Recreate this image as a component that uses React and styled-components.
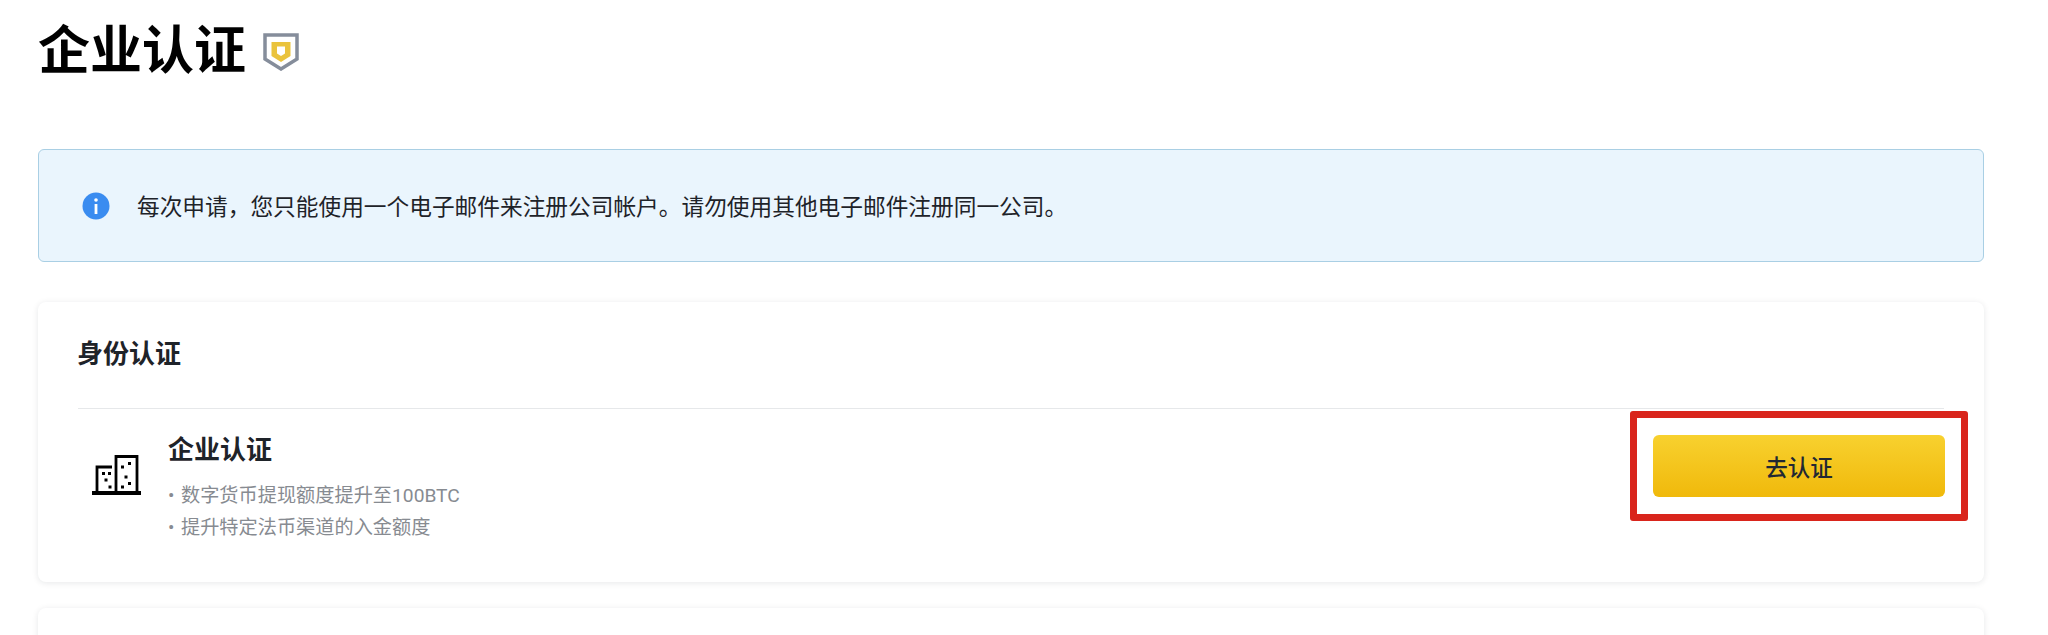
import styled, { createGlobalStyle } from "styled-components";

const GlobalStyle = createGlobalStyle`
  html, body {
    margin: 0;
    padding: 0;
    background: #fff;
    overflow: hidden;
    font-family: Roboto, "Noto Sans CJK SC", sans-serif;
  }
`;

const Page = styled.div`
  height: 635px;
  overflow: hidden;
  padding: 0 64px 0 38px;
`;

const TitleRow = styled.div`
  display: flex;
  align-items: center;
  gap: 17px;
  height: 104px;
  margin-bottom: 45px;
`;

const Title = styled.h1`
  margin: 0;
  font-size: 52px;
  line-height: 104px;
  font-weight: 700;
  color: #000;
`;

const Alert = styled.div`
  display: flex;
  align-items: center;
  gap: 27px;
  height: 113px;
  box-sizing: border-box;
  padding-left: 43px;
  background: #eaf5fd;
  border: 1px solid #a9cfe4;
  border-radius: 6px;
  font-size: 22.7px;
  color: #1e2329;
  margin-bottom: 40px;
`;

const Card = styled.section`
  background: #fff;
  border-radius: 8px;
  box-shadow: 0 1px 6px rgba(20, 30, 40, 0.1);
  margin-bottom: 26px;
  padding: 0 16px 0 40px;
  height: 280px;
  box-sizing: border-box;
`;

const CardTitle = styled.h2`
  margin: 0 24px 0 0;
  height: 107px;
  line-height: 104px;
  font-size: 26px;
  font-weight: 600;
  text-indent: -1px;
  color: #1e2329;
  border-bottom: 1px solid #e6e8ea;
  box-sizing: border-box;
`;

const Row = styled.div`
  display: flex;
  align-items: flex-start;
  justify-content: space-between;
  margin-top: 2px;
`;

const RowLeft = styled.div`
  display: flex;
  align-items: flex-start;
`;

const RowIcon = styled.svg`
  width: 49px;
  height: 40px;
  margin: 44px 0 0 14px;
  flex-shrink: 0;
`;

const RowBody = styled.div`
  margin: 21px 0 0 27px;
`;

const RowTitle = styled.div`
  font-size: 26px;
  font-weight: 600;
  line-height: 36px;
  color: #1e2329;
  margin-bottom: 12px;
`;

const Bullet = styled.div`
  font-size: 19.2px;
  line-height: 32px;
  color: #878b91;
`;

const BulletMark = styled.span`
  display: inline-block;
  width: 13px;
  font-size: 19px;
`;

const Highlight = styled.div`
  border: 7px solid #d9251c;
  border-radius: 3px;
  padding: 17px 16px;
`;

const Button = styled.button`
  display: block;
  width: 292px;
  height: 62px;
  border: none;
  border-radius: 6px;
  background: linear-gradient(180deg, #f8d12f 0%, #f0b90b 100%);
  color: #212833;
  font-family: inherit;
  font-size: 22.5px;
  font-weight: 500;
`;

function ShieldBadge() {
  return (
    <svg width="36" height="38" viewBox="0 0 36 38">
      <path d="M2 2h32v24l-16 10L2 26z" fill="#fff" stroke="#858d9b" strokeWidth="3.5" />
      <path d="M8.500 9h19v14l-9.500 6-9.500-6z" fill="#eac33c" />
      <path d="M14 13.500h8v7l-4 2.500-4-2.500z" fill="#fff" />
    </svg>
  );
}

function InfoIcon() {
  return (
    <svg width="28" height="28" viewBox="0 0 28 28">
      <circle cx="14" cy="14" r="13.500" fill="#3a8cf0" />
      <circle cx="14" cy="8" r="1.800" fill="#fff" />
      <rect x="12.600" y="12" width="2.800" height="10" fill="#fff" />
    </svg>
  );
}

function BuildingIcon() {
  const dots = [
    [10, 17],
    [16, 17],
    [12.500, 23.500],
    [16.500, 30.500],
    [29, 10.500],
    [36, 7],
    [32.500, 20.500],
    [29, 30.500],
    [36, 27],
  ];
  return (
    <RowIcon viewBox="0 0 49 40" fill="none">
      <path d="M0 38h49" stroke="#000" strokeWidth="4" />
      <path d="M5 38V12h15M24 38V1.500h21V38" stroke="#000" strokeWidth="2.800" />
      {dots.map(([x, y]) => (
        <rect key={`${x}-${y}`} x={x} y={y} width="3" height="3" fill="#000" />
      ))}
    </RowIcon>
  );
}

export default function App() {
  return (
    <Page>
      <GlobalStyle />
      <TitleRow>
        <Title>企业认证</Title>
        <ShieldBadge />
      </TitleRow>
      <Alert>
        <InfoIcon />
        每次申请，您只能使用一个电子邮件来注册公司帐户。请勿使用其他电子邮件注册同一公司。
      </Alert>
      <Card>
        <CardTitle>身份认证</CardTitle>
        <Row>
          <RowLeft>
            <BuildingIcon />
            <RowBody>
              <RowTitle>企业认证</RowTitle>
              <Bullet>
                <BulletMark>•</BulletMark>数字货币提现额度提升至100BTC
              </Bullet>
              <Bullet>
                <BulletMark>•</BulletMark>提升特定法币渠道的入金额度
              </Bullet>
            </RowBody>
          </RowLeft>
          <Highlight>
            <Button>去认证</Button>
          </Highlight>
        </Row>
      </Card>
      <Card />
    </Page>
  );
}
